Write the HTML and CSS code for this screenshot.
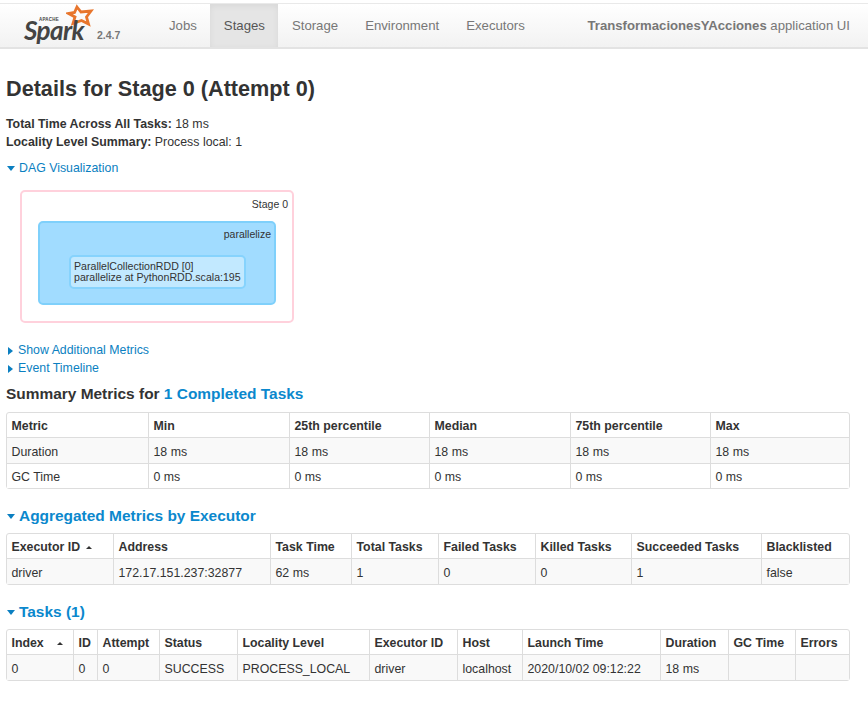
FILE: index.html
```html
<!DOCTYPE html>
<html lang="en">
<head>
<meta charset="utf-8">
<title>Details for Stage 0 (Attempt 0)</title>
<link rel="stylesheet" href="styles.css">
</head>
<body>
<nav class="navbar">
  <div class="brand">
    <div class="logo">
      <svg class="star" width="28" height="24" viewBox="0 0 28 24"><path d="M11 3 L15 8 L25 7 L20.5 13 L22.5 20 L15.5 16.5 L7 19.5 L9 13 L2.5 9.5 L8.5 8.5 Z" fill="none" stroke="#e8762d" stroke-width="2.8" stroke-linejoin="miter"/></svg>
      <span class="apache">APACHE</span>
      <span class="spark">Spark</span>
    </div>
    <span class="version">2.4.7</span>
  </div>
  <ul class="tabs">
    <li class="tab">Jobs</li>
    <li class="tab active">Stages</li>
    <li class="tab">Storage</li>
    <li class="tab">Environment</li>
    <li class="tab">Executors</li>
  </ul>
  <p class="appname"><strong>TransformacionesYAcciones</strong> application UI</p>
</nav>
<main class="page">
  <h3 class="title">Details for Stage 0 (Attempt 0)</h3>
  <ul class="facts">
    <li><strong>Total Time Across All Tasks:</strong> 18 ms</li>
    <li><strong>Locality Level Summary:</strong> Process local: 1</li>
  </ul>
  <a class="toggle dag"><span class="arrow-down"></span>DAG Visualization</a>
  <div class="stage-box">
    <div class="stage-label">Stage 0</div>
    <div class="cluster">
      <div class="cluster-label">parallelize</div>
      <div class="rdd">ParallelCollectionRDD [0]<br>parallelize at PythonRDD.scala:195</div>
    </div>
  </div>
  <a class="toggle"><span class="arrow-right"></span>Show Additional Metrics</a>
  <a class="toggle"><span class="arrow-right"></span>Event Timeline</a>

  <h4 class="summary-head">Summary Metrics for <a class="link">1 Completed Tasks</a></h4>
  <table class="grid t1">
    <colgroup><col class="w141"><col class="w141"><col class="w140"><col class="w141"><col class="w140"><col></colgroup>
    <thead><tr><th>Metric</th><th>Min</th><th>25th percentile</th><th>Median</th><th>75th percentile</th><th>Max</th></tr></thead>
    <tbody>
      <tr><td>Duration</td><td>18 ms</td><td>18 ms</td><td>18 ms</td><td>18 ms</td><td>18 ms</td></tr>
      <tr><td>GC Time</td><td>0 ms</td><td>0 ms</td><td>0 ms</td><td>0 ms</td><td>0 ms</td></tr>
    </tbody>
  </table>

  <h4 class="section"><span class="arrow-down"></span><a class="link">Aggregated Metrics by Executor</a></h4>
  <table class="grid t2">
    <colgroup><col class="w106"><col class="w157"><col class="w81"><col class="w87"><col class="w97"><col class="w96"><col class="w130"><col></colgroup>
    <thead><tr><th>Executor ID<span class="sort"></span></th><th>Address</th><th>Task Time</th><th>Total Tasks</th><th>Failed Tasks</th><th>Killed Tasks</th><th>Succeeded Tasks</th><th>Blacklisted</th></tr></thead>
    <tbody><tr><td>driver</td><td>172.17.151.237:32877</td><td>62 ms</td><td>1</td><td>0</td><td>0</td><td>1</td><td>false</td></tr></tbody>
  </table>

  <h4 class="section"><span class="arrow-down"></span><a class="link">Tasks (1)</a></h4>
  <table class="grid t3">
    <colgroup><col class="w66"><col class="w24"><col class="w62"><col class="w78"><col class="w132"><col class="w88"><col class="w65"><col class="w138"><col class="w68"><col class="w67"><col></colgroup>
    <thead><tr><th>Index<span class="sort wide"></span></th><th>ID</th><th>Attempt</th><th>Status</th><th>Locality Level</th><th>Executor ID</th><th>Host</th><th>Launch Time</th><th>Duration</th><th>GC Time</th><th>Errors</th></tr></thead>
    <tbody><tr><td>0</td><td>0</td><td>0</td><td>SUCCESS</td><td>PROCESS_LOCAL</td><td>driver</td><td>localhost</td><td>2020/10/02 09:12:22</td><td>18 ms</td><td></td><td></td></tr></tbody>
  </table>
</main>
</body>
</html>
```
FILE: styles.css
```css
* { box-sizing: border-box; }
html, body { margin: 0; padding: 0; }
body {
  font-family: "Liberation Sans", Arial, sans-serif;
  font-size: 12.35px;
  line-height: 18px;
  color: #333;
  background: #fff;
  width: 868px;
  height: 712px;
  overflow: hidden;
  padding-top: 3px;
}
.navbar {
  display: flex;
  align-items: stretch;
  height: 46px;
  background: linear-gradient(#fff, #f2f2f2);
  border-top: 1px solid #e9e9e9;
  border-bottom: 2px solid #e3e3e3;
  color: #777;
}
.brand { width: 155.5px; display: flex; align-items: flex-end; flex: none; padding: 0 0 6px 24px; }
.logo { position: relative; width: 68px; height: 38px; }
.star { position: absolute; left: 42px; top: 1px; }
.apache { position: absolute; left: 15px; top: 14px; font-size: 4.5px; line-height: 5px; font-weight: bold; color: #444; letter-spacing: .2px; }
.spark { position: absolute; left: 0; top: 19px; font-family: Lato, "Liberation Sans", sans-serif; font-size: 26px; line-height: 16px; font-weight: bold; font-style: italic; letter-spacing: -.6px; color: #444; }
.version { font-size: 10.5px; font-weight: bold; line-height: 12px; color: #777; margin-left: 5px; }
.tabs { display: flex; list-style: none; margin: 0; padding: 0; }
.tab { font-size: 13.2px; padding: 0 13.5px; line-height: 43px; color: #777; }
.tab.active { background: #e5e5e5; color: #555; box-shadow: inset 0 2px 6px rgba(0,0,0,.06); }
.appname { margin: 0 0 0 auto; padding-right: 18px; font-size: 13.15px; line-height: 43px; color: #777; }
.page { padding: 0 18px 0 6px; }
.title { margin: 25px 0 0; font-size: 21.65px; line-height: 30px; font-weight: bold; color: #333; }
.facts { list-style: none; margin: 11px 0 0; padding: 0; line-height: 18px; }
.toggle { display: block; color: #0b7fc1; line-height: 18px; }
.dag { margin-top: 8px; }
.arrow-down, .arrow-right { display: inline-block; vertical-align: middle; }
.arrow-down { width: 0; height: 0; border: 4px solid transparent; border-top: 5px solid #0b7fc1; border-bottom: 0; margin: 0 4px 0 1px; }
.arrow-right { width: 0; height: 0; border: 4px solid transparent; border-left: 5px solid #0b7fc1; border-right: 0; margin: 0 5px 0 2px; }
.stage-box {
  margin: 13px 0 18px 14px;
  width: 274px;
  height: 133px;
  border: 2px solid #ffd1dc;
  border-radius: 5px;
  padding: 5px 4px 0 16px;
  background: #fff;
}
.stage-label { text-align: right; font-size: 10.5px; line-height: 14px; }
.cluster {
  margin-top: 10px;
  width: 238px;
  height: 84px;
  background: #a1dcff;
  border: 2px solid #7fd0fb;
  border-radius: 5px;
  padding: 4px 3px 0 29px;
}
.cluster-label { text-align: right; font-size: 10.5px; line-height: 14px; }
.rdd {
  margin-top: 14px;
  width: 177px;
  height: 34px;
  background: #c2e9ff;
  border: 2px solid #86d3fd;
  border-radius: 5px;
  font-size: 10.6px;
  line-height: 11px;
  padding: 4px 0 0 3px;
  white-space: nowrap;
}
h4 { margin: 0; font-size: 15.45px; line-height: 22px; font-weight: bold; color: #333; }
.link { color: #0b88cd; }
.summary-head { margin-top: 6px; margin-bottom: 7px; }
.section { margin-top: 16px; margin-bottom: 6px; }
.grid {
  border-collapse: separate;
  border-spacing: 0;
  table-layout: fixed;
  width: 844px;
  border: 1px solid #ddd;
  border-radius: 3px;
}
.grid th, .grid td {
  text-align: left;
  padding: 4px 4px 2px 4.5px;
  height: 25px;
  border-left: 1px solid #ddd;
  white-space: nowrap;
  overflow: hidden;
}
.grid th:first-child, .grid td:first-child { border-left: 0; }
.grid th { font-weight: bold; border-bottom: 1px solid #ddd; }
.grid td { border-top: 1px solid #ddd; background: #f9f9f9; }
.grid tbody tr:first-child td { border-top: 0; }
.t1 tbody tr:last-child td { background: #fff; }
.t1 tbody tr:first-child td { background: #f9f9f9; }
.sort { display: inline-block; vertical-align: middle; width: 0; height: 0; margin-left: 6px; border: 3px solid transparent; border-bottom: 3px solid #333; border-top: 0; }
.sort.wide { margin-left: 13px; }
.w141 { width: 141px; } .w140 { width: 140px; }
.w106 { width: 106px; } .w157 { width: 157px; } .w81 { width: 81px; } .w87 { width: 87px; } .w97 { width: 97px; } .w96 { width: 96px; } .w130 { width: 130px; }
.w66 { width: 66px; } .w24 { width: 24px; } .w62 { width: 62px; } .w78 { width: 78px; } .w132 { width: 132px; } .w88 { width: 88px; } .w65 { width: 65px; } .w138 { width: 138px; } .w68 { width: 68px; } .w67 { width: 67px; }
```
